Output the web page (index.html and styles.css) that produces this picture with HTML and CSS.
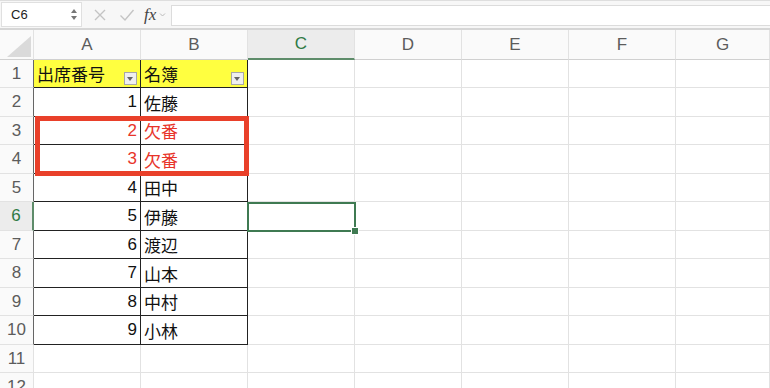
FILE: index.html
```html
<!DOCTYPE html>
<html>
<head>
  <meta charset="utf-8">
  <title>出席番号</title>
  <link rel="stylesheet" href="styles.css">
</head>
<body>
  <div class="formula-bar">
    <div class="name-box">
      <span class="ref">C6</span>
      <span class="spinner"><i class="up"></i><i class="down"></i></span>
    </div>
    <div class="fx-tools">
      <svg class="tool" width="14" height="14" viewBox="0 0 14 14"><path d="M2 2 L12 12 M12 2 L2 12" /></svg>
      <svg class="tool" width="16" height="14" viewBox="0 0 16 14"><path d="M1.5 7.5 L6 12 L14.5 2" /></svg>
      <span class="fx">fx</span>
      <svg class="chev" width="7" height="6" viewBox="0 0 7 6"><path d="M1 1.5 L3.5 4 L6 1.5" /></svg>
    </div>
    <div class="formula-input"></div>
  </div>

  <div class="sheet">
    <div class="corner"><span class="tri"></span></div>
    <div class="ch">A</div><div class="ch">B</div><div class="ch active">C</div><div class="ch">D</div><div class="ch">E</div><div class="ch">F</div><div class="ch">G</div>

    <div class="rh edge">1</div>
    <div class="c t head"><span>出席番号</span><span class="filter"></span></div>
    <div class="c t head"><span>名簿</span><span class="filter"></span></div>
    <div class="c"></div><div class="c"></div><div class="c"></div><div class="c"></div><div class="c"></div>

    <div class="rh edge">2</div>
    <div class="c t num">1</div><div class="c t">佐藤</div>
    <div class="c"></div><div class="c"></div><div class="c"></div><div class="c"></div><div class="c"></div>

    <div class="rh edge">3</div>
    <div class="c t num red">2</div><div class="c t red">欠番</div>
    <div class="c"></div><div class="c"></div><div class="c"></div><div class="c"></div><div class="c"></div>

    <div class="rh edge">4</div>
    <div class="c t num red">3</div><div class="c t red">欠番</div>
    <div class="c"></div><div class="c"></div><div class="c"></div><div class="c"></div><div class="c"></div>

    <div class="rh edge">5</div>
    <div class="c t num">4</div><div class="c t">田中</div>
    <div class="c"></div><div class="c"></div><div class="c"></div><div class="c"></div><div class="c"></div>

    <div class="rh edge active">6</div>
    <div class="c t num">5</div><div class="c t">伊藤</div>
    <div class="c"></div><div class="c"></div><div class="c"></div><div class="c"></div><div class="c"></div>

    <div class="rh edge">7</div>
    <div class="c t num">6</div><div class="c t">渡辺</div>
    <div class="c"></div><div class="c"></div><div class="c"></div><div class="c"></div><div class="c"></div>

    <div class="rh edge">8</div>
    <div class="c t num">7</div><div class="c t">山本</div>
    <div class="c"></div><div class="c"></div><div class="c"></div><div class="c"></div><div class="c"></div>

    <div class="rh edge">9</div>
    <div class="c t num">8</div><div class="c t">中村</div>
    <div class="c"></div><div class="c"></div><div class="c"></div><div class="c"></div><div class="c"></div>

    <div class="rh edge">10</div>
    <div class="c t num">9</div><div class="c t">小林</div>
    <div class="c"></div><div class="c"></div><div class="c"></div><div class="c"></div><div class="c"></div>

    <div class="rh">11</div>
    <div class="c"></div><div class="c"></div><div class="c"></div><div class="c"></div><div class="c"></div><div class="c"></div><div class="c"></div>

    <div class="rh">12</div>
    <div class="c"></div><div class="c"></div><div class="c"></div><div class="c"></div><div class="c"></div><div class="c"></div><div class="c"></div>

    <!-- annotation over A3:B4 and the active cell C6 -->
    <div class="missing-box"></div>
    <div class="selection"><span class="handle"></span></div>
  </div>
</body>
</html>
```

FILE: styles.css
```css
html, body {
  margin: 0;
  width: 100%;
  height: 100%;
  overflow: hidden;
  background: #fff;
}
body {
  font-family: "Liberation Sans", "Noto Sans CJK JP", sans-serif;
  color: #111;
}

/* formula bar */
.formula-bar {
  display: flex;
  align-items: flex-start;
  height: 30px;
  box-sizing: border-box;
  padding-top: 1px;
  border-top: 1px solid #dedede;
  border-bottom: 2px solid #d6d6d6;
  background: #f7f7f7;
}
.name-box {
  display: flex;
  align-items: center;
  justify-content: space-between;
  margin-left: 1px;
  width: 81px;
  height: 25px;
  box-sizing: border-box;
  padding: 0 4px 0 9px;
  background: #fff;
  border: 1px solid #e0e0e0;
  font-size: 13px;
  color: #222;
}
.spinner {
  display: flex;
  flex-direction: column;
  gap: 3px;
}
.spinner i {
  display: block;
  width: 0;
  height: 0;
  border-left: 3px solid transparent;
  border-right: 3px solid transparent;
}
.spinner .up { border-bottom: 4px solid #777; }
.spinner .down { border-top: 4px solid #777; }

.fx-tools {
  display: flex;
  align-items: center;
  gap: 12px;
  height: 25px;
  padding-left: 11px;
  width: 78px;
}
.tool path {
  fill: none;
  stroke: #c4c4c4;
  stroke-width: 1.4;
}
.fx {
  font-family: "Liberation Serif", serif;
  font-style: italic;
  font-size: 17px;
  color: #444;
  margin-left: -3px;
}
.chev {
  margin-left: -9px;
}
.chev path {
  fill: none;
  stroke: #bbb;
  stroke-width: 1;
}
.formula-input {
  flex: 1;
  height: 21px;
  box-sizing: border-box;
  margin-top: 3px;
  background: #fff;
  border: 1px solid #dcdcdc;
  border-right: none;
}

/* grid */
.sheet {
  position: relative;
  display: grid;
  grid-template-columns: 34px repeat(6, 107px) 1fr;
  grid-template-rows: 30px 28px 29px 28px 29px 28px 29px 28px 29px 28px 29px 28px 29px;
}
.corner, .ch, .rh, .c {
  box-sizing: border-box;
  border-right: 1px solid #e2e2e2;
  border-bottom: 1px solid #e2e2e2;
}
.corner {
  display: flex;
  align-items: flex-end;
  justify-content: flex-end;
  padding: 0 2px 2px 0;
  background: #fafafa;
  border-bottom-color: #d0d0d0;
}
.corner .tri {
  width: 24px;
  height: 21px;
  background: #dadada;
  clip-path: polygon(100% 0, 100% 100%, 0 100%);
}
.ch {
  display: flex;
  align-items: center;
  justify-content: center;
  background: #fafafa;
  border-bottom-color: #d0d0d0;
  font-size: 17px;
  color: #5c5c5c;
}
.ch.active {
  background: #ececec;
  color: #2f7a45;
  border-bottom: 2px solid #5e8c6a;
}
.rh {
  display: flex;
  align-items: center;
  justify-content: center;
  background: #fafafa;
  font-size: 17px;
  color: #5c5c5c;
}
.rh.edge {
  border-right-color: #666;
}
.rh.active {
  background: #ececec;
  color: #2f7a45;
  border-right: 2px solid #5e8c6a;
}

.c {
  display: flex;
  align-items: center;
  padding: 0 3px;
  font-size: 16px;
  white-space: nowrap;
}
.c.t {
  border-right-color: #222;
  border-bottom-color: #222;
  font-family: "Noto Sans CJK JP", sans-serif;
  font-size: 17px;
}
.c.num {
  justify-content: flex-end;
  font-family: "Liberation Sans", "Noto Sans CJK JP", sans-serif;
  font-size: 17px;
}
.c.red {
  color: #e8342a;
}
.c.head {
  justify-content: space-between;
  background: #ffff40;
}
.filter {
  align-self: flex-end;
  position: relative;
  width: 13px;
  height: 13px;
  margin-bottom: 2px;
  box-sizing: border-box;
  border: 1px solid #a8a8a8;
  background: #efefef;
}
.filter:after {
  content: "";
  position: absolute;
  left: 2px;
  top: 4px;
  border-left: 3.5px solid transparent;
  border-right: 3.5px solid transparent;
  border-top: 4px solid #666;
}

.missing-box {
  position: absolute;
  left: 35px;
  top: 86px;
  width: 214px;
  height: 60px;
  box-sizing: border-box;
  border: 5px solid #e9402a;
}
.selection {
  position: absolute;
  left: 247px;
  top: 172px;
  width: 109px;
  height: 30px;
  box-sizing: border-box;
  border: 2px solid #3f7a52;
}
.selection .handle {
  position: absolute;
  right: -5px;
  bottom: -5px;
  width: 6px;
  height: 6px;
  background: #3f7a52;
  border: 1px solid #fff;
}
```
